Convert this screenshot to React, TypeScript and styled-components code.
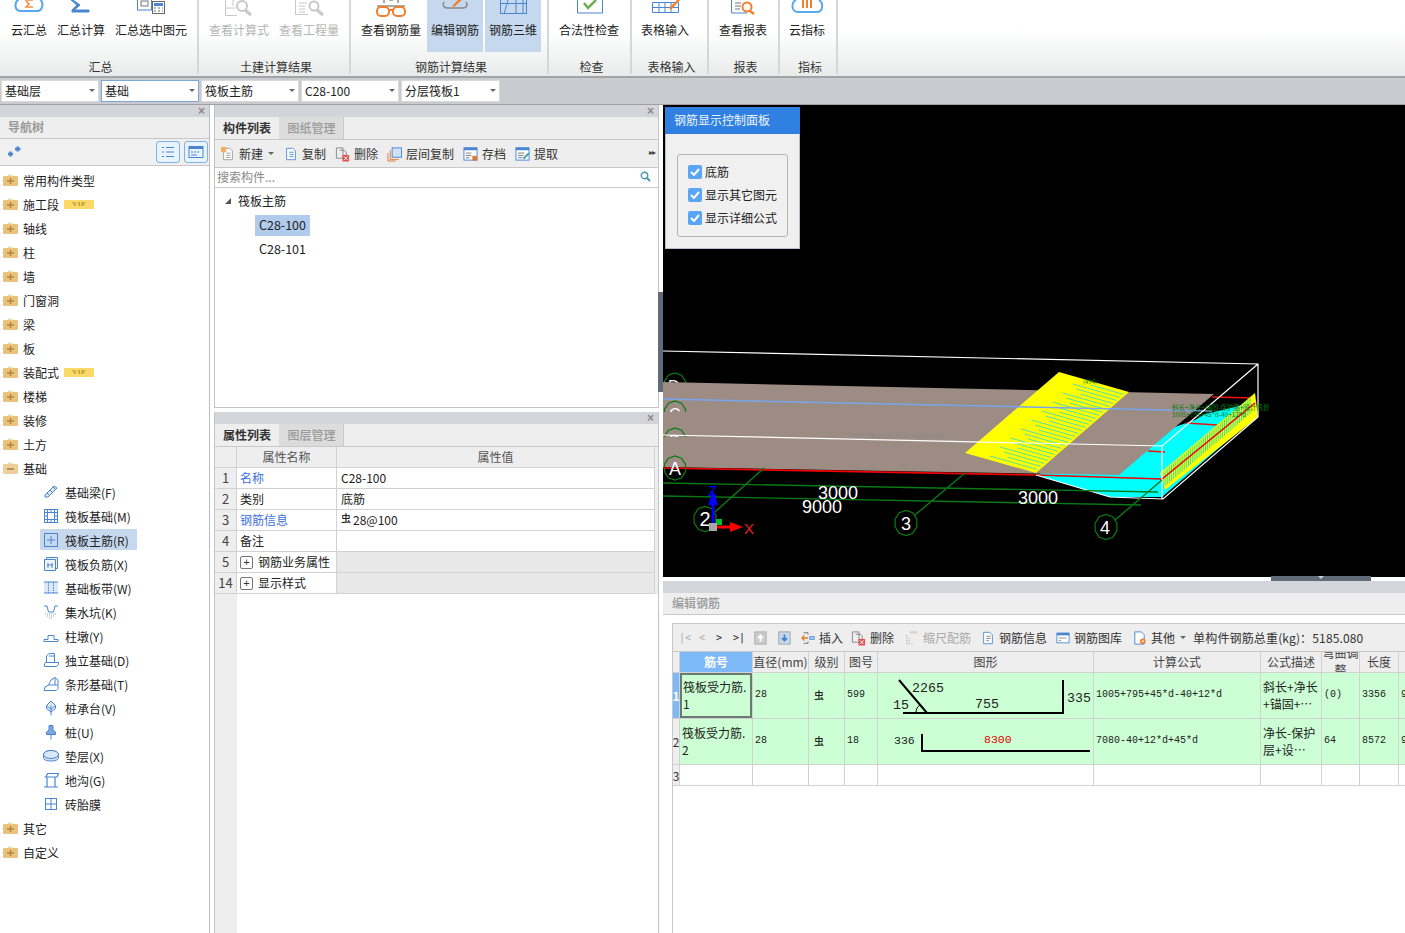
import React from "react";
import styled, { createGlobalStyle } from "styled-components";

const GlobalStyle = createGlobalStyle`
  html, body { margin: 0; padding: 0; background: #fff; }
  body { font-family: "Noto Sans CJK SC", "Noto Sans", sans-serif; font-size: 12px; color: #222; }
  * { box-sizing: border-box; }
`;

const Page = styled.div`
  width: 1405px; height: 933px; overflow: hidden; display: flex; flex-direction: column; background: #fff;
`;

/* ---------- ribbon ---------- */
const Ribbon = styled.div`
  height: 78px; flex: none; display: flex;
  background: linear-gradient(#fff 0, #fff 30px, #e9ebeb 76px);
  border-bottom: 2px solid #a2a4a6;
`;
const RibbonGroup = styled.div<{ $w: number; $pad: number }>`
  width: ${(p) => p.$w}px; height: 74px; flex: none; display: flex; flex-direction: column;
  padding-left: ${(p) => p.$pad}px; border-right: 2px solid #d6d8d8;
`;
const RibbonButtons = styled.div`display: flex; gap: 2px; height: 52px;`;
const RibbonButton = styled.div<{ $active?: boolean; $disabled?: boolean }>`
  height: 52px; padding: 0 4px; display: flex; flex-direction: column; align-items: center;
  background: ${(p) => (p.$active ? "#c6d8ee" : "transparent")};
  color: ${(p) => (p.$disabled ? "#b4b4b4" : "#222")};
  svg { display: block; flex: none; }
`;
const RibbonLabel = styled.span`height: 24px; line-height: 24px; white-space: nowrap;`;
const RibbonTitle = styled.div<{ $shift: number }>`
  height: 22px; line-height: 30px; text-align: center; color: #333; padding-left: 4px;
  margin-left: ${(p) => -p.$shift}px;
`;

/* ---------- selector bar ---------- */
const SelectBar = styled.div`
  height: 27px; flex: none; background: #c9cbd0; border-bottom: 1px solid #9ea0a4;
  display: flex; gap: 2px; padding: 2px 0 0 1px;
`;
const SelectBox = styled.div<{ $focus?: boolean; $w: number }>`
  width: ${(p) => p.$w}px; height: 22px; background: #fff; display: flex; align-items: center;
  justify-content: space-between; padding: 0 3px 1px 3px; color: #222;
  border: 1px solid ${(p) => (p.$focus ? "#7fa6d8" : "#dadada")};
`;
const Caret = styled.span<{ $ml?: number; $mr?: number }>`
  width: 0; height: 0; flex: none; border-left: 3px solid transparent; border-right: 3px solid transparent;
  border-top: 3px solid #666; margin-left: ${(p) => p.$ml ?? 0}px; margin-right: ${(p) => p.$mr ?? 0}px;
`;

/* ---------- main columns ---------- */
const Main = styled.div`flex: 1; min-height: 0; display: flex; background: #fff;`;
const NavColumn = styled.div`
  width: 210px; flex: none; display: flex; flex-direction: column; border-right: 1px solid #bcbcbc;
`;
const MiddleColumn = styled.div`
  width: 445px; margin-left: 4px; flex: none; display: flex; flex-direction: column; gap: 4px;
`;
const CloseStrip = styled.div`
  height: 12px; flex: none; background: #d3d5da; color: #8a8a8a; display: flex; align-items: center;
  justify-content: flex-end; padding-right: 4px; font: bold 12px "Liberation Sans", sans-serif;
`;
const NavHeader = styled.div`
  height: 22px; flex: none; background: #eeeeee; border-bottom: 1px solid #c8c8c8; color: #9a9a9a;
  font-weight: 700; padding-left: 8px; line-height: 19px;
`;
const NavTools = styled.div`
  height: 27px; flex: none; background: #f0f0f0; border-bottom: 1px solid #c8c8c8; display: flex;
  align-items: center; padding: 0 1px 0 7px; gap: 4px;
  > svg:first-child { margin-right: auto; }
`;
const ToggleButton = styled.div`
  width: 24px; height: 22px; border: 1px solid #7db2ea; border-radius: 3px; background: #e9f3fd;
  display: flex; align-items: center; justify-content: center;
`;
const Tree = styled.div`padding-top: 2px; display: flex; flex-direction: column;`;
const TreeRow = styled.div<{ $child?: boolean }>`
  height: 24px; display: flex; align-items: center; gap: ${(p) => (p.$child ? 6 : 5)}px;
  padding-left: ${(p) => (p.$child ? 43 : 3)}px; position: relative; white-space: nowrap; color: #222;
  svg { flex: none; position: relative; }
  span { position: relative; }
`;
const RowHighlight = styled.i`
  position: absolute; left: 40px; top: 1px; width: 97px; height: 21px; background: #c6d8ee;
`;
const VipBadge = styled.b`
  width: 30px; height: 9px; background: #fbd968; color: #b8902a; text-align: center;
  font: bold 7px/9px "Liberation Serif", serif; letter-spacing: .5px;
`;

/* ---------- middle panels ---------- */
const Panel = styled.div<{ $h?: number }>`
  display: flex; flex-direction: column; border-right: 1px solid #c4c4c4; border-left: 1px solid #c4c4c4;
  ${(p) => (p.$h ? `height: ${p.$h}px; flex: none; border-bottom: 1px solid #c4c4c4;` : "flex: 1; min-height: 0;")}
`;
const TabBar = styled.div`
  height: 23px; flex: none; background: #eeeeee; display: flex; border-bottom: 1px solid #c8c8c8;
`;
const Tab = styled.div<{ $active?: boolean }>`
  width: ${(p) => (p.$active ? 64 : 65)}px; text-align: center; line-height: 21px; font-weight: ${(p) => (p.$active ? 700 : 500)};
  background: ${(p) => (p.$active ? "#eeeeee" : "#dcdcdc")}; color: ${(p) => (p.$active ? "#333" : "#9a9a9a")};
  border-right: ${(p) => (p.$active ? "none" : "1px solid #c8c8c8")}; padding-left: ${(p) => (p.$active ? 0 : 1)}px;
`;
const ListTools = styled.div`
  height: 28px; flex: none; background: #eeeeee; border-bottom: 1px solid #c8c8c8; display: flex;
  align-items: center; gap: 9px; padding-left: 6px; position: relative;
`;
const ToolItem = styled.div<{ $disabled?: boolean; $mr?: number }>`
  display: flex; align-items: center; gap: 4px; white-space: nowrap; flex: none;
  color: ${(p) => (p.$disabled ? "#aaa" : "#333")}; margin-right: ${(p) => p.$mr ?? 0}px;
  svg { display: block; flex: none; }
`;
const MoreArrows = styled.span`
  position: absolute; right: 3px; top: 6px; font: 8px/14px "DejaVu Sans", sans-serif; color: #444; letter-spacing: -1px;
`;
const SearchBox = styled.div`
  height: 20px; flex: none; border-bottom: 1px solid #c8c8c8; display: flex; align-items: center;
  justify-content: space-between; padding: 0 7px 2px 2px; color: #8a8a8a;
`;
const ListTree = styled.div`flex: 1; padding: 1px 0 0 10px;`;
const ListHead = styled.div`
  height: 26px; display: flex; align-items: center; gap: 7px; padding-bottom: 4px; color: #222;
`;
const ExpandMark = styled.i`
  width: 0; height: 0; border-left: 6px solid transparent; border-bottom: 6px solid #555; margin-top: 2px;
`;
const ListLeaf = styled.div<{ $selected?: boolean }>`
  width: 55px; height: 21px; margin: 0 0 3px 30px; text-align: center; line-height: 19px; color: #222;
  background: ${(p) => (p.$selected ? "#b0cbec" : "transparent")}; font-size: 12.5px;
`;

/* property table */
const PropGrid = styled.div`display: flex; flex-direction: column; flex: 1; min-height: 0;`;
const PropRow = styled.div<{ $fill?: boolean }>`
  display: grid; grid-template-columns: 22px 100px 318px 3px; flex: none; height: 21px;
  ${(p) => (p.$fill ? "flex: 1;" : "")}
`;
const PropCell = styled.div<{ $kind?: "index" | "head" | "link" | "muted" | "value" }>`
  display: flex; align-items: center; gap: 5px; padding: 0 3px 2px; overflow: hidden; white-space: nowrap;
  border-right: 1px solid #d2d2d2; border-bottom: 1px solid #d2d2d2;
  ${(p) => p.$kind === "index" && "background:#eeeeee;justify-content:center;color:#444;font-size:13px;padding:0 0 1px;"}
  ${(p) => p.$kind === "head" && "background:#eeeeee;justify-content:center;color:#555;"}
  ${(p) => p.$kind === "link" && "color:#3c6fe0;"}
  ${(p) => p.$kind === "muted" && "background:#e8e8e8;"}
  ${(p) => p.$kind === "value" && "padding-left:4px;"}
`;
const PropEnd = styled.div`background: #eeeeee;`;
const PropFillIndex = styled.div`background: #eeeeee;`;
const PlusBox = styled.i`
  width: 13px; height: 13px; border: 1px solid #777; border-radius: 2px; flex: none; color: #333; font-style: normal; margin-top: 2px;
  display: flex; align-items: center; justify-content: center; font: 11px/1 "Liberation Sans", sans-serif;
`;
const GradeMark = styled.span<{ $up?: boolean }>`
  font-size: 10px; line-height: 10px; font-weight: 500; ${(p) => (p.$up ? "margin-bottom: 3px; margin-right: -5px;" : "")}
`;

/* ---------- right column ---------- */
const RightColumn = styled.div`flex: 1; min-width: 0; margin-left: 4px; display: flex; flex-direction: column; position: relative;`;
const SideHandle = styled.div`
  position: absolute; left: -5px; top: 187px; width: 5px; height: 100px; background: #5f6b78; z-index: 2;
`;
const Canvas = styled.div`height: 472px; flex: none; background: #000; position: relative; svg { display: block; }`;
const ControlPanel = styled.div`
  position: absolute; left: 2px; top: 2px; width: 135px; height: 142px; background: #f0f0f0; border: 1px solid #b8c0cc; border-top: none;
`;
const ControlTitle = styled.div`
  height: 27px; margin: 0 -1px; background: #2f80e0; color: #eef5ff; line-height: 25px; padding-left: 9px;
`;
const ControlGroup = styled.div`
  margin: 20px 0 0 11px; width: 111px; height: 83px; border: 1px solid #b4b4b4; border-radius: 3px; background: #f0f0f0;
  padding: 10px 0 0 10px; display: flex; flex-direction: column; gap: 9px;
`;
const CheckRow = styled.div`display: flex; align-items: center; gap: 3px; height: 14px; color: #222; white-space: nowrap;`;
const CheckLabel = styled.span`margin-bottom: 2px;`;
const CheckMark = styled.i`
  width: 14px; height: 14px; background: #5aa5f5; border-radius: 2px; display: flex; align-items: center; justify-content: center;
`;
const SplitterBar = styled.div`height: 4px; flex: none; background: #fff; position: relative;`;
const SplitterGrip = styled.div`
  position: absolute; left: 608px; top: -1px; width: 100px; height: 5px; background: #5f6b78;
  display: flex; justify-content: center;
  &::after { content: ""; border-left: 3px solid transparent; border-right: 3px solid transparent; border-top: 3px solid #c8ccd0; }
`;
const EditStrip = styled.div`height: 12px; flex: none; background: #d3d5da;`;
const EditHeader = styled.div`
  height: 22px; flex: none; background: #eeeeee; border-bottom: 1px solid #c8c8c8; color: #999; line-height: 19px; padding-left: 9px; font-weight: 500;
`;
const EditBody = styled.div`flex: 1; min-height: 0; padding: 8px 0 0 9px; overflow: hidden;`;
const EditFrame = styled.div`border-left: 1px solid #c8c8c8; border-top: 1px solid #c8c8c8; height: 100%; background: #fff;`;
const EditTools = styled.div`
  height: 28px; background: #eeeeee; border-bottom: 1px solid #c8c8c8; display: flex; align-items: center; gap: 8px; padding-left: 6px; white-space: nowrap;
`;
const PagerGroup = styled.div`display: flex; gap: 10px; margin-right: 2px; font: 10px/12px "DejaVu Sans Mono", monospace;`;
const PagerGlyph = styled.span<{ $off?: boolean; $w: number }>`
  width: ${(p) => p.$w}px; color: ${(p) => (p.$off ? "#aaa" : "#222")};
`;
const TotalWeight = styled.span`color: #333; letter-spacing: .15px;`;
const GridRow = styled.div<{ $h: number }>`
  display: grid; grid-template-columns: 7px 73px 56px 36px 33px 216px 167px 61px 38px 39px 60px;
  height: ${(p) => p.$h}px; width: 786px;
`;
type CellKind = "head" | "headActive" | "index" | "indexActive" | "green" | "greenSelected" | "blank";
const cellStyles: Record<CellKind, string> = {
  head: "background:#eeeeee;color:#444;justify-content:center;text-align:center;padding:0 0 2px;",
  headActive: "background:#7db8f8;color:#fff;justify-content:center;font-weight:700;padding:0 0 2px;",
  index: "background:#eeeeee;color:#333;justify-content:center;font-size:12px;padding:0;",
  indexActive: "background:#7db8f8;color:#fff;justify-content:center;font-weight:700;font-size:12px;padding:0;",
  green: "background:#ccffd4;color:#222;padding:0 2px 2px;",
  greenSelected: "background:#ccffd4;color:#222;box-shadow:inset 0 0 0 2px #6a7a70;padding:0 3px 2px;",
  blank: "background:#fff;",
};
const GridCell = styled.div<{ $kind: CellKind; $mono?: boolean }>`
  display: flex; align-items: center; overflow: hidden; line-height: 17px;
  border-right: 1px solid #d2d2d2; border-bottom: 1px solid #d2d2d2; white-space: pre-line;
  ${(p) => cellStyles[p.$kind]}
  ${(p) => (p.$mono ? `font-family: "Liberation Mono", monospace; font-size: 10px; white-space: nowrap;` : "")}
  svg { display: block; flex: none; margin: 0 -2px -2px; }
  svg text { font-family: "Liberation Mono", monospace; }
`;
const GradeCell = styled(GridCell)`padding-left: 5px;`;
const ValueText = styled.span`margin-left: 2px;`;

/* ---------- ribbon icons (32x18, clipped by the window's top edge) ---------- */
const Ico = ({ children, w = 32, h = 18 }: { children: React.ReactNode; w?: number; h?: number }) => (
  <svg width={w} height={h} viewBox={`0 0 ${w} ${h}`} fill="none">{children}</svg>
);
const ribbonIcons: Record<string, React.ReactNode> = {
  cloudSum: <><path d="M6 -1C1 2 1 11 8 11H24C30 11 31 3 27 -1" stroke="#5aa8ec" strokeWidth="2" /><path d="M12 0h8M13 1l3 3-3 3h7" stroke="#f09040" strokeWidth="1.5" /></>,
  sigma: <path d="M8 0L15 5L9.5 10H24V12H7V10L12 5L6 0Z" fill="#4a86d0" stroke="#4a86d0" />,
  selCalc: <><rect x="2.5" y="-4" width="14" height="14" stroke="#4a86d0" /><rect x="6" y="1" width="7" height="5" stroke="#777" /><rect x="17.5" y="1.5" width="12" height="12" fill="#fff" stroke="#666" /><rect x="19" y="3" width="9" height="3" fill="#4a86d0" /><path d="M19 8h2M23 8h2M27 8h1M19 11h2M23 11h2M27 11h1" stroke="#666" /></>,
  calcGray: <><path d="M2.5 15.5V0M2.5 15.5H14M2.5 8H12M10 0V6" stroke="#c8c8c8" /><circle cx="19" cy="6" r="5" stroke="#c8c8c8" strokeWidth="2" /><path d="M22 10l6 5" stroke="#c8c8c8" strokeWidth="3" /></>,
  qtyGray: <><path d="M2.5 0V14.5H15M6 3h8M6 6h6M6 9h6M6 12h6" stroke="#c8c8c8" /><circle cx="21" cy="6" r="4.5" stroke="#c8c8c8" strokeWidth="2" /><path d="M24 10l6 5" stroke="#c8c8c8" strokeWidth="3" /></>,
  glasses: <><path d="M2 6H30M9 0v3M23 0v3M14 0h4" stroke="#555" strokeWidth="1" /><rect x="2" y="7" width="12" height="9" rx="4" stroke="#f08030" strokeWidth="2" /><rect x="18" y="7" width="12" height="9" rx="4" stroke="#f08030" strokeWidth="2" /><path d="M14 10h4" stroke="#f08030" strokeWidth="2" /></>,
  editBar: <><path d="M5 2C3 5 5 8 8 8H24C28 8 29 4 27 2" stroke="#888" strokeWidth="1.5" /><path d="M13 6L19 0H23L15 7Z" fill="#f08030" /></>,
  grid3d: <><path d="M3.5 3.5H29.5M3.5 13.5H29.5M3.5 0V14M29.5 0V14M11 0L7 14M19 0V14M26 0V14" stroke="#4a86d0" /></>,
  check: <><path d="M4.5 0V13H29.5V0" stroke="#4a86d0" /><path d="M11 3L15 8L23 0" stroke="#6cae54" strokeWidth="2.5" /></>,
  tableEdit: <><path d="M3.5 2.5H29.5V12.5H3.5ZM3.5 7.5H29.5M10 2.5V12.5M16 2.5V12.5M22 2.5V12.5" stroke="#4a86d0" /><path d="M20 8L28 0H31L22 10Z" fill="#f08030" /></>,
  report: <><path d="M4.5 0V13H20" stroke="#4a86d0" /><path d="M8 3h6M8 6h6M8 9h5" stroke="#777" /><circle cx="20" cy="7" r="4.5" stroke="#f08030" strokeWidth="2" /><path d="M23 11l4 3" stroke="#f08030" strokeWidth="2.5" /></>,
  cloudBars: <><path d="M5 0C0 2 0 12 7 12H26C32 12 33 3 28 0" stroke="#5aa8ec" strokeWidth="2" /><path d="M12 0v8M16 0v8M20 0v8" stroke="#f08030" strokeWidth="2" /></>,
};

/* ---------- tree icons ---------- */
const FolderIcon = ({ open }: { open?: boolean }) => (
  <svg width="15" height="14" viewBox="0 0 15 14">
    <path d="M5 1.5h4l1 1.5H5Z" fill="#f2dcae" />
    <rect x="0" y="3" width="15" height="10" rx="1" fill={open ? "#eccf9b" : "#e8c27e"} />
    {open ? <path d="M4 8h7" stroke="#a87c2c" strokeWidth="1.5" /> : <path d="M4 8h7M7.5 5v6" stroke="#b8862f" strokeWidth="1.5" />}
  </svg>
);
const B = "#4a86d0";
const navIcons: Record<string, React.ReactNode> = {
  beam: <path d="M2 11L11 2l3 2-9 9H2ZM4 9l2 2M7 6l2 2M10 3l2 2" stroke={B} fill="#dbe8f7" />,
  raft: <><rect x="1.5" y="1.5" width="13" height="13" stroke={B} strokeWidth="1" fill="none" /><rect x="4.5" y="4.5" width="7" height="7" stroke={B} fill="none" /><path d="M1 4.5h3M1 8h3M1 11.5h3M12 4.5h3M12 8h3M12 11.5h3M4.5 1v3M8 1v3M11.5 1v3M4.5 12v3M8 12v3M11.5 12v3" stroke={B} /></>,
  main: <><rect x="1.5" y="1.5" width="13" height="13" stroke={B} fill="none" /><path d="M8 4v8M4 8h8" stroke={B} /></>,
  neg: <><path d="M1.5 3.5h11v11h-11ZM3.5 3V1.5h11v11H13" stroke={B} fill="#eef4fb" /><path d="M5 7v5M9 7v5M4 9h6" stroke={B} /></>,
  strip: <><rect x="1" y="2" width="14" height="11" fill="#dbe8f7" /><path d="M5.5 2v11M10.5 2v11" stroke={B} strokeDasharray="1.5 1" /><path d="M1 2h14M1 13h14" stroke={B} /></>,
  sump: <><path d="M1 2h3l1.5 6h5L12 2h3" stroke={B} fill="none" /><path d="M2 10h12M4 12h8M6 14h4" stroke="#8aa8cc" strokeDasharray="1 1" /></>,
  pier: <path d="M1 13.5h14v-2h-4v-4H5v4H1Z" stroke={B} fill="#fff" />,
  iso: <><path d="M1.5 14.5h12l2-2v-2h-4V1.5H6L3.5 4v6.5h-1l-1 1.5ZM3.5 10.5h11M6 4h5.5" stroke={B} fill="#fff" /></>,
  stripF: <><path d="M1 14.5h12l2-2V4l-3-2.5L8 4 5.5 9 2 11ZM5.5 9h9M12 1.5V9" stroke={B} fill="#fff" /></>,
  cap: <><path d="M8 1l4.5 4.5v3L8 12 3.5 8.5v-3ZM8 5v10.5M3.5 5.5L8 9l4.5-3.5" stroke={B} fill="#dbe8f7" /></>,
  pile: <path d="M6 1.5h4v4.5l2.5 2v2.5h-9V8L6 6ZM8 10v5.5" stroke={B} fill="#7ea6de" />,
  cushion: <><ellipse cx="8" cy="6.5" rx="7.5" ry="4" fill="#dbe8f7" stroke={B} /><path d="M.5 6.5v3c0 2.5 3.5 3.5 7.5 3.5s7.5-1 7.5-3.5v-3" stroke={B} fill="#cfe0f4" /><ellipse cx="8" cy="6.5" rx="7.5" ry="4" fill="#dbe8f7" stroke={B} /></>,
  trench: <path d="M1 15h14M3 5h11l1.5-3.5H4.5ZM4 5v10M12 5v10M1.5 5H14" stroke={B} strokeWidth="1.2" fill="none" />,
  mould: <><rect x="2.5" y="2.5" width="11" height="11" stroke={B} fill="none" /><path d="M8 2v11M2 8h11" stroke={B} /></>,
};

/* ---------- toolbar icons ---------- */
const T = (k: string, w = 14) => <svg width={w} height="16" viewBox="0 0 16 16" fill="none">{toolIcons[k]}</svg>;
const doc = (c: string) => <path d="M3 1.5h7l3 3v10H3Z" stroke={c} fill="#fff" />;
const toolIcons: Record<string, React.ReactNode> = {
  new: <>{doc("#999")}<path d="M6 7h5M6 9.5h5M6 12h5" stroke="#999" /><rect x="0" y="0" width="6" height="6" fill="#f4b060" /></>,
  copy: <>{doc(B)}<path d="M6 6h5M6 8.5h5M6 11h5" stroke={B} /></>,
  del: <><path d="M1.5 1.5h7v11h-7Z" stroke="#888" /><path d="M5 4h5l2 2v3" stroke="#888" /><rect x="8" y="9" width="7" height="7" fill="#e05050" /><path d="M9.5 10.5l4 4M13.5 10.5l-4 4" stroke="#fff" /></>,
  floor: <><rect x="5.5" y="1.5" width="10" height="10" fill="#cfe2f8" stroke={B} /><path d="M3.5 4v10h9M1 7v8.5h8" stroke="#e07830" /></>,
  save: <><rect x="1" y="1.5" width="14" height="13" fill="#fff" stroke={B} /><rect x="1" y="1" width="14" height="3" fill={B} /><path d="M3 7h6M3 9.5h6M3 12h4" stroke="#777" /><rect x="10" y="10" width="5" height="5" fill="#e07830" /></>,
  pick: <><rect x="1" y="1.5" width="14" height="13" fill="#fff" stroke={B} /><rect x="1" y="1" width="14" height="3" fill={B} /><path d="M3 7h7M3 9.5h6M3 12h5" stroke="#777" /><path d="M9 13l6-6" stroke="#3a9ab0" strokeWidth="2" /></>,
  up: <><rect x="2" y="1" width="13" height="14" fill="#ccc" stroke="#aaa" /><path d="M8.5 12V5M5.5 8l3-3 3 3" stroke="#fff" strokeWidth="2" /></>,
  down: <><rect x="2" y="1" width="13" height="14" fill="#ccd6e4" stroke="#8aa" /><path d="M8.5 4v7M5.5 8l3 3 3-3" stroke="#3a80d8" strokeWidth="2" /></>,
  insert: <><path d="M1 8H8M4 5L1 8l3 3" stroke="#e87820" strokeWidth="1.5" /><path d="M3 2h5M3 14h5M8 2v2M8 12v2" stroke="#666" /><rect x="10" y="6.5" width="5" height="3" fill="#bcd6f4" stroke={B} /></>,
  scale: <path d="M2 15V4M2 15h2M2 11h1M2 7h1M5 15V8M8 15v-3M5 1h9M7 1v2M10 1v2M13 1v2" stroke="#bbb" strokeDasharray="2 1" />,
  info: <>{doc(B)}<path d="M6 6h5M6 8.5h5M6 11h3" stroke="#777" /></>,
  lib: <><rect x="1" y="2.5" width="14" height="11" fill="#fff" stroke={B} /><rect x="1" y="2" width="14" height="3" fill={B} /><path d="M3 8h9M3 11h3" stroke="#888" /></>,
  other: <>{doc(B)}<circle cx="11.5" cy="11.5" r="3" fill="#f08030" /><circle cx="11.5" cy="11.5" r="1" fill="#fff" /></>,
};
const SearchIcon = () => (
  <svg width="11" height="11" viewBox="0 0 11 11" fill="none"><circle cx="4.5" cy="4.5" r="3.2" stroke="#4a94b8" strokeWidth="1.4" /><path d="M7 7l3 3" stroke="#4a94b8" strokeWidth="2" /></svg>
);

/* ---------- data ---------- */
const ribbon = [
  { title: "汇总", w: 199, pad: 7, items: [["云汇总", "cloudSum"], ["汇总计算", "sigma"], ["汇总选中图元", "selCalc"]] },
  { title: "土建计算结果", w: 152, pad: 6, items: [["查看计算式", "calcGray", "d"], ["查看工程量", "qtyGray", "d"]] },
  { title: "钢筋计算结果", w: 198, pad: 6, items: [["查看钢筋量", "glasses"], ["编辑钢筋", "editBar", "a"], ["钢筋三维", "grid3d", "a"]] },
  { title: "检查", w: 83, pad: 6, items: [["合法性检查", "check"]] },
  { title: "表格输入", w: 77, pad: 5, items: [["表格输入", "tableEdit"]] },
  { title: "报表", w: 71, pad: 6, items: [["查看报表", "report"]] },
  { title: "指标", w: 58, pad: 5, items: [["云指标", "cloudBars"]] },
];
const selects = [["基础层", 98], ["基础", 98, true], ["筏板主筋", 98], ["C28-100", 98], ["分层筏板1", 99]] as const;
const beforeFoundation = [["常用构件类型"], ["施工段", true], ["轴线"], ["柱"], ["墙"], ["门窗洞"], ["梁"], ["板"], ["装配式", true], ["楼梯"], ["装修"], ["土方"]] as const;
const foundation = [
  ["基础梁(F)", "beam"], ["筏板基础(M)", "raft"], ["筏板主筋(R)", "main", true], ["筏板负筋(X)", "neg"], ["基础板带(W)", "strip"],
  ["集水坑(K)", "sump"], ["柱墩(Y)", "pier"], ["独立基础(D)", "iso"], ["条形基础(T)", "stripF"], ["桩承台(V)", "cap"],
  ["桩(U)", "pile"], ["垫层(X)", "cushion"], ["地沟(G)", "trench"], ["砖胎膜", "mould"],
] as const;
const listTools: [string, string, number][] = [["复制", "copy", 14], ["删除", "del", 15], ["层间复制", "floor", 15], ["存档", "save", 15], ["提取", "pick", 15]];

const octagon = (cx: number, cy: number, r: number) =>
  Array.from({ length: 10 }, (_, i) => {
    const a = (Math.PI * 2 * i) / 10 + Math.PI / 10;
    return `${(cx + r * Math.cos(a)).toFixed(1)},${(cy + r * 1.1 * Math.sin(a)).toFixed(1)}`;
  }).join(" ");

const lerp = (a: number, b: number, t: number) => a + (b - a) * t;

const Scene = () => {
  const hatch = Array.from({ length: 26 }, (_, i) => {
    const t = (i + 1) / 27;
    const x1 = lerp(965, 1059, t), y1 = lerp(453, 372, t), x2 = lerp(1036, 1129, t), y2 = lerp(473, 392, t);
    const start = i % 3 === 0 ? 0.3 : i % 3 === 1 ? 0.5 : 0.4;
    return (
      <line key={i} x1={lerp(x1, x2, start)} y1={lerp(y1, y2, start)} x2={lerp(x1, x2, 0.97)} y2={lerp(y1, y2, 0.97)} stroke="#28d8d0" strokeWidth=".8" />
    );
  });
  const sideHatch = Array.from({ length: 42 }, (_, i) => {
    const t = i / 41;
    return <line key={i} x1={lerp(1163, 1250, t)} y1={lerp(488, 414, t) - 16} x2={lerp(1163, 1250, t)} y2={lerp(488, 414, t)} stroke="#00d8d0" strokeWidth=".8" />;
  });
  return (
    <svg width="742" height="472" viewBox="663 105 742 472" fill="none">
      <defs>
        <clipPath id="cutC"><rect x="660" y="398" width="40" height="14" /></clipPath>
        <clipPath id="cutB"><rect x="660" y="425" width="40" height="12" /></clipPath>
      </defs>
      <polygon points={octagon(675, 385, 11)} stroke="#0a7a14" strokeWidth="1.2" />
      <text x="668" y="392" fill="#fff" fontFamily="Liberation Sans" fontSize="16">D</text>
      <polygon points="1036,475 1110,497 1162,497 1255,417 1252,403 1205,414 1195,420" fill="#00ffff" />
      <polygon points="663,382 1214,394 1119,475 663,467" fill="#9c8c84" />
      <g clipPath="url(#cutC)">
        <polygon points={octagon(675, 413, 11)} stroke="#0a7a14" strokeWidth="1.2" />
        <text x="669" y="420" fill="#fff" fontFamily="Liberation Sans" fontSize="16">C</text>
      </g>
      <g clipPath="url(#cutB)">
        <polygon points={octagon(675, 440, 11)} stroke="#0a7a14" strokeWidth="1.2" />
        <text x="669" y="447" fill="#fff" fontFamily="Liberation Sans" fontSize="16">B</text>
      </g>
      <polygon points={octagon(675, 468, 11)} stroke="#0a7a14" strokeWidth="1.2" />
      <text x="848" y="438" fill="#8a8a8a" fontFamily="Noto Sans CJK SC" fontSize="6">1005+795+45*d-40+12*d 斜长+净长</text>
      <polygon points="1059,372 1129,392 1036,473 965,453" fill="#ffff00" />
      {hatch}
      <path d="M1212 397L1255 398M1186 423L1217 425M1148 451L1165 452" stroke="#f01010" strokeWidth="1.5" />
      <polygon points="1160,473 1255,393 1258,417 1165,490" fill="#ffff00" />
      {sideHatch}
      <path d="M663 399L1212 411" stroke="#7aa5ee" strokeWidth="1.5" />
      <path d="M663 468L1036 475L1162 479L1255 403" stroke="#f00000" strokeWidth="1.6" />
      <path d="M663 351L1258 364V417L1163 499L1110 497L1036 475M1258 364L1162 446V499M663 435L1163 446" stroke="#fff" strokeWidth="1.2" />
      <path d="M663 483L1158 492M663 496L1141 505M715 512L764 468M915 515L965 473M1115 520L1162 480" stroke="#0a7a14" strokeWidth="1.4" />
      <polygon points={octagon(705, 519, 11.5)} stroke="#0a7a14" strokeWidth="1.2" />
      <polygon points={octagon(906, 523, 11.5)} stroke="#0a7a14" strokeWidth="1.2" />
      <polygon points={octagon(1106, 527, 11.5)} stroke="#0a7a14" strokeWidth="1.2" />
      <g fill="#fff" fontFamily="Liberation Sans" textAnchor="middle">
        <text x="675" y="475" fontSize="18">A</text>
        <text x="705" y="526" fontSize="20">2</text>
        <text x="906" y="530" fontSize="18">3</text>
        <text x="1105" y="534" fontSize="18">4</text>
        <text x="838" y="499" fontSize="18">3000</text>
        <text x="822" y="513" fontSize="18">9000</text>
        <text x="1038" y="504" fontSize="18">3000</text>
      </g>
      <g fill="#0a7a14" fontFamily="Noto Sans CJK SC" fontSize="6.5">
        <text x="1172" y="410">斜长+净长+锚固-保护层+设计弯折</text>
        <text x="1172" y="417">1005+795+45*d-40+12*d</text>
        <text x="1083" y="384" fontSize="6">(494)</text>
      </g>
      <path d="M713 525V500" stroke="#0000ff" strokeWidth="3" /><polygon points="713,490 708,505 718,505" fill="#0000ff" />
      <path d="M716 527H732" stroke="#ff0000" strokeWidth="3" /><polygon points="743,527 730,522 730,532" fill="#ff0000" />
      <rect x="716" y="519" width="6" height="6" fill="#00c020" />
      <rect x="709" y="523" width="8" height="8" fill="#a8a8a8" />
      <text x="708" y="496" fill="#0000ff" fontFamily="Liberation Sans" fontSize="15">Z</text>
      <text x="744" y="534" fill="#f02020" fontFamily="Liberation Sans" fontSize="15">X</text>
    </svg>
  );
};

const ShapeOne = () => (
  <svg width="215" height="45" viewBox="0 0 215 45" fill="none">
    <path d="M21 7L49 40M25 40H185V7" stroke="#000" strokeWidth="2" />
    <path d="M38 40a9 9 0 0 1 4 -8" stroke="#000" />
    <g fill="#222" fontSize="13.3">
      <text x="34" y="19">2265</text><text x="15" y="36">15</text><text x="97" y="35">755</text><text x="189" y="29">335</text>
    </g>
  </svg>
);
const ShapeTwo = () => (
  <svg width="215" height="45" viewBox="0 0 215 45" fill="none">
    <path d="M44 15V32H212" stroke="#000" strokeWidth="2" />
    <text x="16" y="25" fill="#222" fontSize="11.5">336</text>
    <text x="106" y="24" fill="#e00000" fontSize="11.5">8300</text>
  </svg>
);

export default function App() {
  return (
    <Page>
      <GlobalStyle />
      <Ribbon>
        {ribbon.map((g) => (
          <RibbonGroup key={g.title} $w={g.w} $pad={g.pad}>
            <RibbonButtons>
              {g.items.map(([label, icon, flag]) => (
                <RibbonButton key={label} $active={flag === "a"} $disabled={flag === "d"}>
                  <Ico>{ribbonIcons[icon]}</Ico>
                  <RibbonLabel>{label}</RibbonLabel>
                </RibbonButton>
              ))}
            </RibbonButtons>
            <RibbonTitle $shift={g.pad}>{g.title}</RibbonTitle>
          </RibbonGroup>
        ))}
      </Ribbon>
      <SelectBar>
        {selects.map(([label, w, focus]) => (
          <SelectBox key={label} $w={w} $focus={!!focus}>{label}<Caret /></SelectBox>
        ))}
      </SelectBar>
      <Main>
        <NavColumn>
          <CloseStrip>×</CloseStrip>
          <NavHeader>导航树</NavHeader>
          <NavTools>
            <svg width="14" height="12" viewBox="0 0 14 12" fill="none">
              <path d="M1 8h5M3.5 5.5v5M8 3h5.5M10.7 .5v5" stroke={B} strokeWidth="2.4" />
            </svg>
            <ToggleButton>
              <svg width="14" height="14" viewBox="0 0 14 14" fill="none"><path d="M1 2.5h2M1 7h2M1 11.5h2M5 2.5h8M5 7h8M5 11.5h8" stroke={B} /></svg>
            </ToggleButton>
            <ToggleButton>
              <svg width="16" height="14" viewBox="0 0 16 14" fill="none"><rect x="1" y="1.5" width="14" height="11" stroke={B} /><rect x="1" y="1" width="14" height="3" fill={B} /><path d="M3 7h2M6 7h2M9 7h2M3 10h6" stroke={B} /></svg>
            </ToggleButton>
          </NavTools>
          <Tree>
            {beforeFoundation.map(([label, vip]) => (
              <TreeRow key={label}>
                <FolderIcon /><span>{label}</span>{vip && <VipBadge>VIP</VipBadge>}
              </TreeRow>
            ))}
            <TreeRow><FolderIcon open /><span>基础</span></TreeRow>
            {foundation.map(([label, icon, sel]) => (
              <TreeRow key={label} $child>
                {sel && <RowHighlight />}
                <svg width="16" height="16" viewBox="0 0 16 16" fill="none">{navIcons[icon]}</svg>
                <span>{label}</span>
              </TreeRow>
            ))}
            <TreeRow><FolderIcon /><span>其它</span></TreeRow>
            <TreeRow><FolderIcon /><span>自定义</span></TreeRow>
          </Tree>
        </NavColumn>

        <MiddleColumn>
          <Panel $h={303}>
            <CloseStrip>×</CloseStrip>
            <TabBar><Tab $active>构件列表</Tab><Tab>图纸管理</Tab></TabBar>
            <ListTools>
              <ToolItem>{T("new")}新建<Caret $ml={1} $mr={1} /></ToolItem>
              {listTools.map(([label, icon, w]) => (
                <ToolItem key={label}>{T(icon, w)}{label}</ToolItem>
              ))}
              <MoreArrows>▸▸</MoreArrows>
            </ListTools>
            <SearchBox>搜索构件...<SearchIcon /></SearchBox>
            <ListTree>
              <ListHead><ExpandMark />筏板主筋</ListHead>
              <ListLeaf $selected>C28-100</ListLeaf>
              <ListLeaf>C28-101</ListLeaf>
            </ListTree>
          </Panel>
          <Panel>
            <CloseStrip>×</CloseStrip>
            <TabBar><Tab $active>属性列表</Tab><Tab>图层管理</Tab></TabBar>
            <PropGrid>
              <PropRow>
                <PropCell $kind="index" /><PropCell $kind="head">属性名称</PropCell><PropCell $kind="head">属性值</PropCell><PropEnd />
              </PropRow>
              <PropRow><PropCell $kind="index">1</PropCell><PropCell $kind="link">名称</PropCell><PropCell $kind="value">C28-100</PropCell><PropEnd /></PropRow>
              <PropRow><PropCell $kind="index">2</PropCell><PropCell>类别</PropCell><PropCell $kind="value">底筋</PropCell><PropEnd /></PropRow>
              <PropRow>
                <PropCell $kind="index">3</PropCell><PropCell $kind="link">钢筋信息</PropCell>
                <PropCell $kind="value"><GradeMark $up>虫</GradeMark><ValueText>28@100</ValueText></PropCell><PropEnd />
              </PropRow>
              <PropRow><PropCell $kind="index">4</PropCell><PropCell>备注</PropCell><PropCell /><PropEnd /></PropRow>
              <PropRow><PropCell $kind="index">5</PropCell><PropCell><PlusBox>+</PlusBox>钢筋业务属性</PropCell><PropCell $kind="muted" /><PropEnd /></PropRow>
              <PropRow><PropCell $kind="index">14</PropCell><PropCell><PlusBox>+</PlusBox>显示样式</PropCell><PropCell $kind="muted" /><PropEnd /></PropRow>
              <PropRow $fill><PropFillIndex /></PropRow>
            </PropGrid>
          </Panel>
        </MiddleColumn>

        <RightColumn>
          <SideHandle />
          <Canvas>
            <Scene />
            <ControlPanel>
              <ControlTitle>钢筋显示控制面板</ControlTitle>
              <ControlGroup>
                {["底筋", "显示其它图元", "显示详细公式"].map((t) => (
                  <CheckRow key={t}>
                    <CheckMark>
                      <svg width="10" height="8" viewBox="0 0 10 8" fill="none"><path d="M1 4l3 3 5-6" stroke="#fff" strokeWidth="2" /></svg>
                    </CheckMark>
                    <CheckLabel>{t}</CheckLabel>
                  </CheckRow>
                ))}
              </ControlGroup>
            </ControlPanel>
          </Canvas>
          <SplitterBar><SplitterGrip /></SplitterBar>
          <EditStrip />
          <EditHeader>编辑钢筋</EditHeader>
          <EditBody>
            <EditFrame>
              <EditTools>
                <PagerGroup>
                  <PagerGlyph $off $w={10}>|&lt;</PagerGlyph>
                  <PagerGlyph $off $w={7}>&lt;</PagerGlyph>
                  <PagerGlyph $w={7}>&gt;</PagerGlyph>
                  <PagerGlyph $w={10}>&gt;|</PagerGlyph>
                </PagerGroup>
                <ToolItem $mr={2}>{T("up")}</ToolItem>
                <ToolItem $mr={2}>{T("down")}</ToolItem>
                <ToolItem>{T("insert")}插入</ToolItem>
                <ToolItem $mr={3}>{T("del", 15)}删除</ToolItem>
                <ToolItem $disabled $mr={2}>{T("scale")}缩尺配筋</ToolItem>
                <ToolItem $mr={1}>{T("info")}钢筋信息</ToolItem>
                <ToolItem $mr={2}>{T("lib")}钢筋图库</ToolItem>
                <ToolItem $mr={-1}>{T("other", 15)}其他<Caret $ml={1} /></ToolItem>
                <TotalWeight>单构件钢筋总重(kg)：5185.080</TotalWeight>
              </EditTools>
              <GridRow $h={21}>
                <GridCell $kind="head" />
                <GridCell $kind="headActive">筋号</GridCell>
                <GridCell $kind="head">直径(mm)</GridCell>
                <GridCell $kind="head">级别</GridCell>
                <GridCell $kind="head">图号</GridCell>
                <GridCell $kind="head">图形</GridCell>
                <GridCell $kind="head">计算公式</GridCell>
                <GridCell $kind="head">公式描述</GridCell>
                <GridCell $kind="head">{"弯曲调\n整"}</GridCell>
                <GridCell $kind="head">长度</GridCell>
                <GridCell $kind="head" />
              </GridRow>
              <GridRow $h={46}>
                <GridCell $kind="indexActive">1</GridCell>
                <GridCell $kind="greenSelected">{"筏板受力筋.\n1"}</GridCell>
                <GridCell $kind="green" $mono>28</GridCell>
                <GradeCell $kind="green"><GradeMark>虫</GradeMark></GradeCell>
                <GridCell $kind="green" $mono>599</GridCell>
                <GridCell $kind="green"><ShapeOne /></GridCell>
                <GridCell $kind="green" $mono>1005+795+45*d-40+12*d</GridCell>
                <GridCell $kind="green">{"斜长+净长\n+锚固+…"}</GridCell>
                <GridCell $kind="green" $mono>(0)</GridCell>
                <GridCell $kind="green" $mono>3356</GridCell>
                <GridCell $kind="green" $mono>9</GridCell>
              </GridRow>
              <GridRow $h={46}>
                <GridCell $kind="index">2</GridCell>
                <GridCell $kind="green">{"筏板受力筋.\n2"}</GridCell>
                <GridCell $kind="green" $mono>28</GridCell>
                <GradeCell $kind="green"><GradeMark>虫</GradeMark></GradeCell>
                <GridCell $kind="green" $mono>18</GridCell>
                <GridCell $kind="green"><ShapeTwo /></GridCell>
                <GridCell $kind="green" $mono>7080-40+12*d+45*d</GridCell>
                <GridCell $kind="green">{"净长-保护\n层+设…"}</GridCell>
                <GridCell $kind="green" $mono>64</GridCell>
                <GridCell $kind="green" $mono>8572</GridCell>
                <GridCell $kind="green" $mono>9</GridCell>
              </GridRow>
              <GridRow $h={21}>
                <GridCell $kind="index">3</GridCell>
                {Array.from({ length: 10 }, (_, i) => <GridCell key={i} $kind="blank" />)}
              </GridRow>
            </EditFrame>
          </EditBody>
        </RightColumn>
      </Main>
    </Page>
  );
}
